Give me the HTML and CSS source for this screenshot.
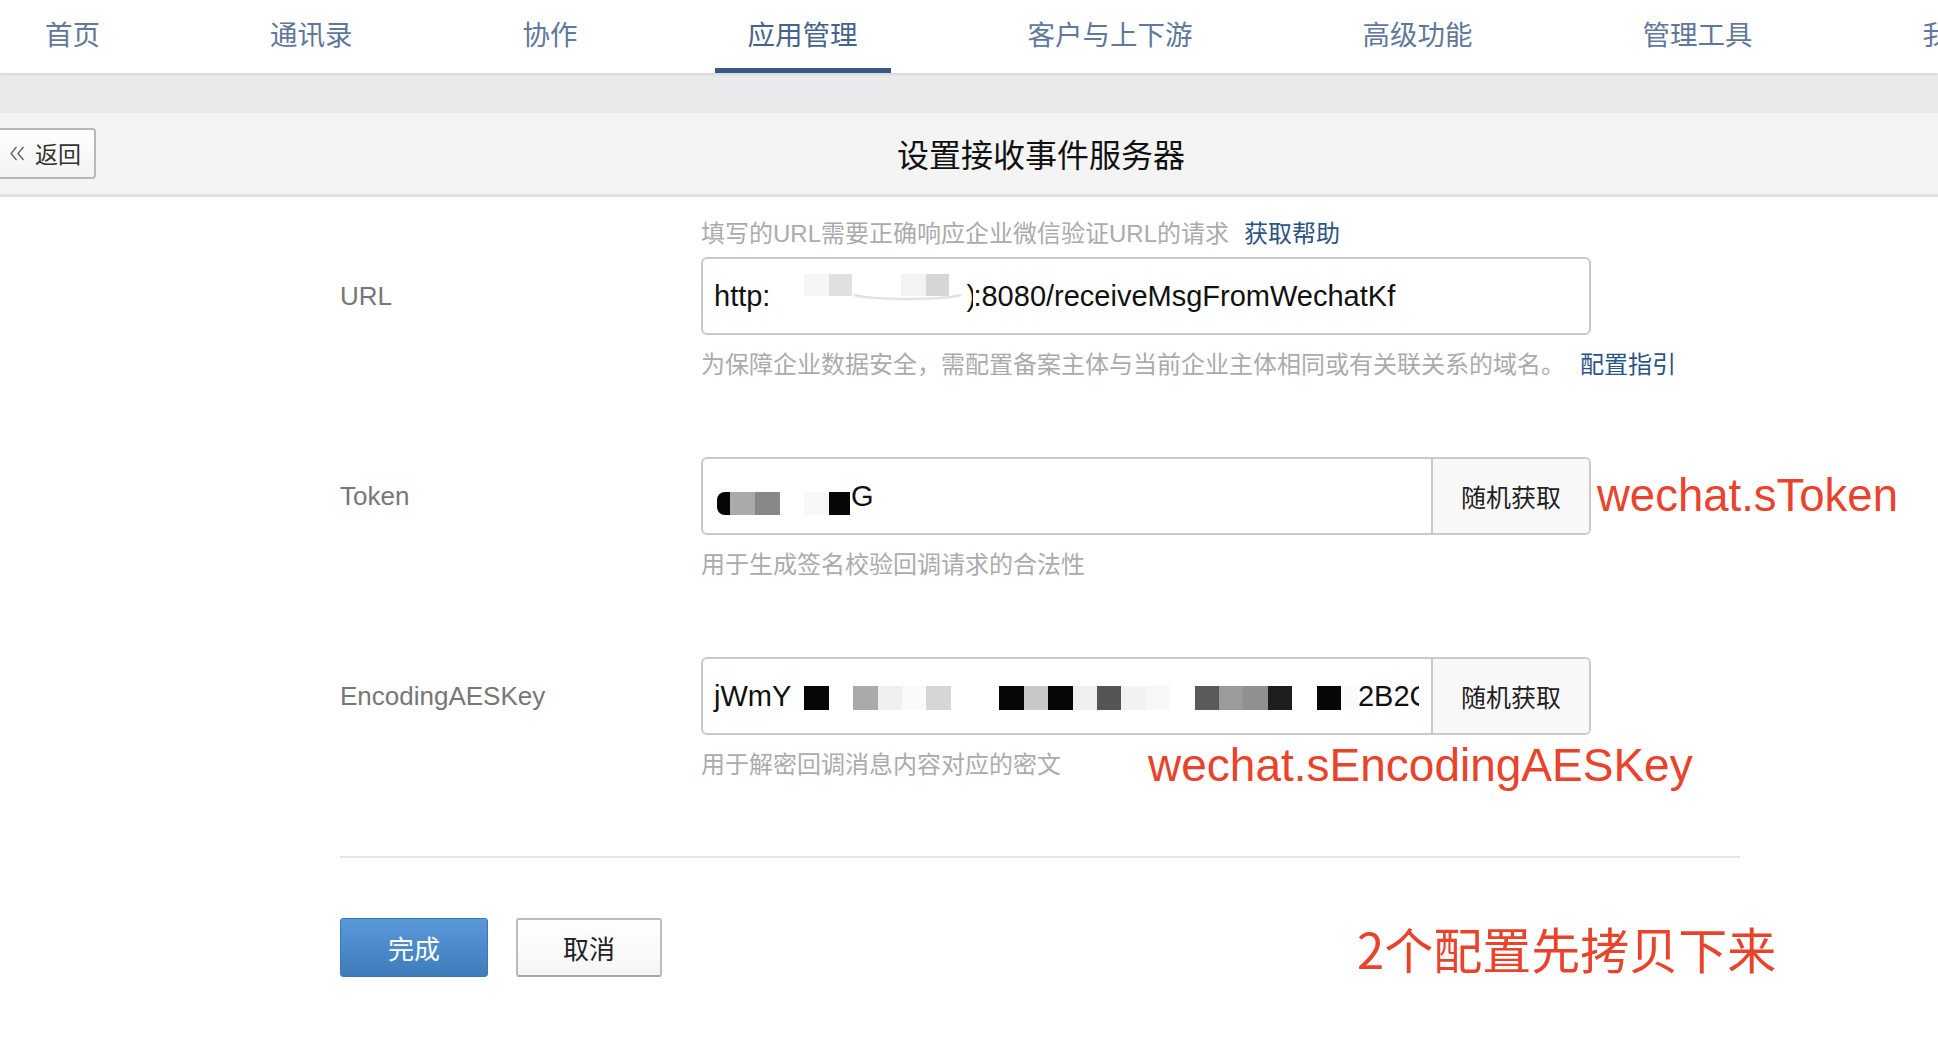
FILE: index.html
```html
<!DOCTYPE html>
<html lang="zh-CN">
<head>
<meta charset="utf-8">
<title>设置接收事件服务器</title>
<link rel="stylesheet" href="styles.css">
</head>
<body>
<nav class="topnav">
  <a class="nav-item">首页</a>
  <a class="nav-item">通讯录</a>
  <a class="nav-item">协作</a>
  <a class="nav-item active">应用管理</a>
  <a class="nav-item">客户与上下游</a>
  <a class="nav-item">高级功能</a>
  <a class="nav-item">管理工具</a>
  <a class="nav-item">我的企业</a>
</nav>
<div class="band"></div>
<header class="pagehead">
  <button class="back" type="button">
    <svg class="back-icon" width="15" height="15" viewBox="0 0 15 15"><path d="M6.5 1 L1 7.5 L6.5 14 M13.5 1 L8 7.5 L13.5 14" fill="none" stroke="#555" stroke-width="1.2"/></svg>
    <span>返回</span>
  </button>
  <h1 class="title">设置接收事件服务器</h1>
</header>
<main class="form">
  <div class="field">
    <p class="hint hint-top">填写的URL需要正确响应企业微信验证URL的请求<a class="link link-top">获取帮助</a></p>
    <div class="label">URL</div>
    <div class="input-row">
      <div class="input">
        <div class="input-text">
          <span>http:</span>
          <span class="censor censor-url">
            <i class="px w34 sw"></i><i class="px w25 sf6"></i><i class="px w23 se"></i><i class="px w49 sw"></i><i class="px w25 sf3"></i><i class="px w23 sd"></i>
            <i class="smear"></i>
          </span>
          <span class="clipped">)</span><span>:8080/receiveMsgFromWechatKf</span>
        </div>
      </div>
    </div>
    <p class="hint">为保障企业数据安全，需配置备案主体与当前企业主体相同或有关联关系的域名。<a class="link">配置指引</a></p>
  </div>

  <div class="field">
    <div class="label">Token</div>
    <div class="input-row">
      <div class="input">
        <div class="input-text">
          <span class="censor censor-token">
            <i class="px cap s0"></i><i class="px w25 sa"></i><i class="px w25 s8"></i><i class="px w24 sw"></i><i class="px w25 sf7"></i><i class="px w21 s0"></i>
          </span>
          <span>G</span>
        </div>
        <button class="rand" type="button">随机获取</button>
      </div>
      <span class="mark mark-token">wechat.sToken</span>
    </div>
    <p class="hint">用于生成签名校验回调请求的合法性</p>
  </div>

  <div class="field">
    <div class="label">EncodingAESKey</div>
    <div class="input-row">
      <div class="input">
        <div class="input-text">
          <span>jWmY</span>
          <span class="censor censor-aes">
            <i class="px s0"></i><i class="px sw"></i><i class="px sa"></i><i class="px sf0"></i><i class="px sfa"></i><i class="px sd"></i><i class="px sw"></i><i class="px sw"></i><i class="px s0"></i><i class="px sc"></i><i class="px s0"></i><i class="px sf0"></i><i class="px s5"></i><i class="px sf2"></i><i class="px sf8"></i><i class="px sw"></i><i class="px s5a"></i><i class="px s9b"></i><i class="px s9"></i><i class="px s1"></i><i class="px sw"></i><i class="px s0"></i><i class="px w17 sfa"></i>
          </span>
          <span>2B2C3kx</span>
        </div>
        <button class="rand" type="button">随机获取</button>
      </div>
    </div>
    <p class="hint">用于解密回调消息内容对应的密文<span class="mark mark-aes">wechat.sEncodingAESKey</span></p>
  </div>

  <div class="divider"></div>

  <div class="actions">
    <button class="btn btn-primary" type="button">完成</button>
    <button class="btn btn-default" type="button">取消</button>
    <span class="mark mark-note">2个配置先拷贝下来</span>
  </div>
</main>
</body>
</html>
```
FILE: styles.css
```css
* { box-sizing: border-box; margin: 0; padding: 0; }
html, body { background: #fff; }
body {
  width: 1938px;
  overflow: hidden;
  font-family: "Liberation Sans", "Noto Sans CJK SC", sans-serif;
  color: #222;
}

/* top navigation */
.topnav {
  position: relative;
  z-index: 1;
  display: flex;
  gap: 104px;
  height: 73px;
  padding-left: 12px;
  background: #fff;
  white-space: nowrap;
  overflow: hidden;
  box-shadow: 0 1px 3px rgba(0, 0, 0, 0.12);
}
.nav-item {
  flex: none;
  height: 73px;
  padding: 0 33px;
  font-family: "Noto Sans CJK SC", sans-serif;
  font-size: 27.5px;
  line-height: 66px;
  color: #5f789b;
  border-bottom: 5px solid transparent;
  text-decoration: none;
}
.nav-item.active {
  color: #46638c;
  border-bottom-color: #3a5a86;
}

.band {
  height: 40px;
  background: #e9eaec;
}

/* page header */
.pagehead {
  display: flex;
  align-items: center;
  height: 84px;
  background: #f4f4f4;
  border-bottom: 3px solid #dfe3e8;
}
.back {
  display: flex;
  align-items: center;
  gap: 10px;
  flex: none;
  width: 100px;
  height: 51px;
  margin-left: -4px;
  padding-left: 12px;
  border: 2px solid #b8b8b8;
  border-radius: 4px;
  background: linear-gradient(#ffffff, #f3f3f3);
  font-family: "Noto Sans CJK SC", sans-serif;
  font-size: 23px;
  line-height: 1;
  color: #333;
  cursor: pointer;
}
.back-icon { flex: none; }
.title {
  margin-left: 801px;
  font-family: "Noto Sans CJK SC", sans-serif;
  font-size: 32px;
  font-weight: 400;
  line-height: 1.2;
  color: #111;
}

/* form */
.form {
  width: 1740px;
  padding: 20px 0 0 340px;
}
.field {
  display: grid;
  grid-template-columns: 361px auto;
  grid-template-areas:
    ". top"
    "label input"
    ". hint";
}
.field + .field { margin-top: 75px; }

.label {
  grid-area: label;
  align-self: center;
  font-size: 26px;
  color: #777;
}
.hint {
  grid-area: hint;
  display: flex;
  align-items: center;
  margin-top: 13px;
  font-size: 24px;
  line-height: 34px;
  color: #ababab;
  white-space: nowrap;
}
.hint-top {
  grid-area: top;
  margin: 0 0 6px;
}
.link {
  margin-left: 15px;
  color: #2c5385;
  text-decoration: none;
}
.link-top { margin-left: 15px; }

.input-row {
  grid-area: input;
  display: flex;
  align-items: center;
}
.input {
  display: flex;
  flex: none;
  width: 890px;
  height: 78px;
  border: 2px solid #c9c9c9;
  border-radius: 6px;
  background: #fff;
  overflow: hidden;
}
.input-text {
  display: flex;
  align-items: center;
  flex: 1;
  min-width: 0;
  margin-right: 12px;
  padding-left: 11px;
  font-size: 29px;
  color: #111;
  white-space: nowrap;
  overflow: hidden;
}
.clipped {
  display: block;
  flex: none;
  width: 10px;
  padding-left: 3px;
  overflow: hidden;
}
.rand {
  flex: none;
  width: 158px;
  border: none;
  border-left: 2px solid #c5cad0;
  background: #f8f8f8;
  font-family: "Noto Sans CJK SC", sans-serif;
  font-size: 25px;
  color: #222;
  cursor: pointer;
}

/* mosaic censoring */
.censor {
  display: flex;
  flex: none;
}
.censor-url {
  position: relative;
  align-items: flex-start;
  align-self: center;
  width: 193px;
  height: 44px;
}
.censor-url .px { height: 22px; }
.smear {
  position: absolute;
  left: 82px;
  top: 12px;
  width: 111px;
  height: 12px;
  border-radius: 50%;
  box-shadow: 0 3px 2px -1px rgba(0, 0, 0, 0.14);
}
.censor-token {
  height: 23px;
  margin: 14px 1px 0 3px;
}
.censor-token .px { height: 23px; }
.censor-aes {
  height: 24px;
  margin: 3px 0 0 13px;
}
.px {
  display: block;
  flex: none;
  width: 24.4px;
  height: 24px;
}
.cap { width: 13px; border-radius: 8px 0 0 8px; }
.w17 { width: 17px; }
.w21 { width: 21px; }
.w23 { width: 23px; }
.w24 { width: 24px; }
.w25 { width: 25px; }
.w34 { width: 34px; }
.w49 { width: 49px; }
.s0 { background: #060606; }
.s1 { background: #1e1e1e; }
.s5 { background: #555; }
.s5a { background: #5a5a5a; }
.s8 { background: #888; }
.s9 { background: #909090; }
.s9b { background: #9b9b9b; }
.sa { background: #aaa; }
.sc { background: #c8c8c8; }
.sd { background: #d6d6d6; }
.se { background: #e0e0e0; }
.sf0 { background: #f0f0f0; }
.sf2 { background: #f2f2f2; }
.sf3 { background: #f3f3f3; }
.sf6 { background: #f6f6f6; }
.sf7 { background: #f7f7f7; }
.sf8 { background: #f8f8f8; }
.sfa { background: #fafafa; }
.sw { background: #fff; }

/* red annotations */
.mark {
  font-family: "Liberation Sans", "Noto Sans CJK SC", sans-serif;
  color: #e9432c;
  white-space: nowrap;
}
.mark-token {
  margin-left: 6px;
  font-size: 45.5px;
  line-height: 1;
}
.mark-aes {
  margin-left: 87px;
  font-size: 46px;
  line-height: 34px;
}

.divider {
  width: 1400px;
  height: 2px;
  margin-top: 74px;
  background: #e6e6e8;
}

.actions {
  display: flex;
  align-items: center;
  gap: 28px;
  margin-top: 60px;
}
.btn {
  flex: none;
  height: 59px;
  border-radius: 3px;
  font-family: "Noto Sans CJK SC", sans-serif;
  font-size: 26px;
  cursor: pointer;
}
.btn-primary {
  width: 148px;
  border: 1px solid #3b77b6;
  background: linear-gradient(#5b98d9, #3e7cbc);
  color: #fff;
}
.btn-default {
  width: 146px;
  border: 2px solid #bcbcbc;
  border-bottom-color: #a8a8a8;
  background: linear-gradient(#ffffff, #f6f6f6);
  color: #222;
}
.mark-note {
  margin-left: 667px;
  font-family: "Noto Sans CJK SC", sans-serif;
  font-size: 49px;
  line-height: 1;
}
```
